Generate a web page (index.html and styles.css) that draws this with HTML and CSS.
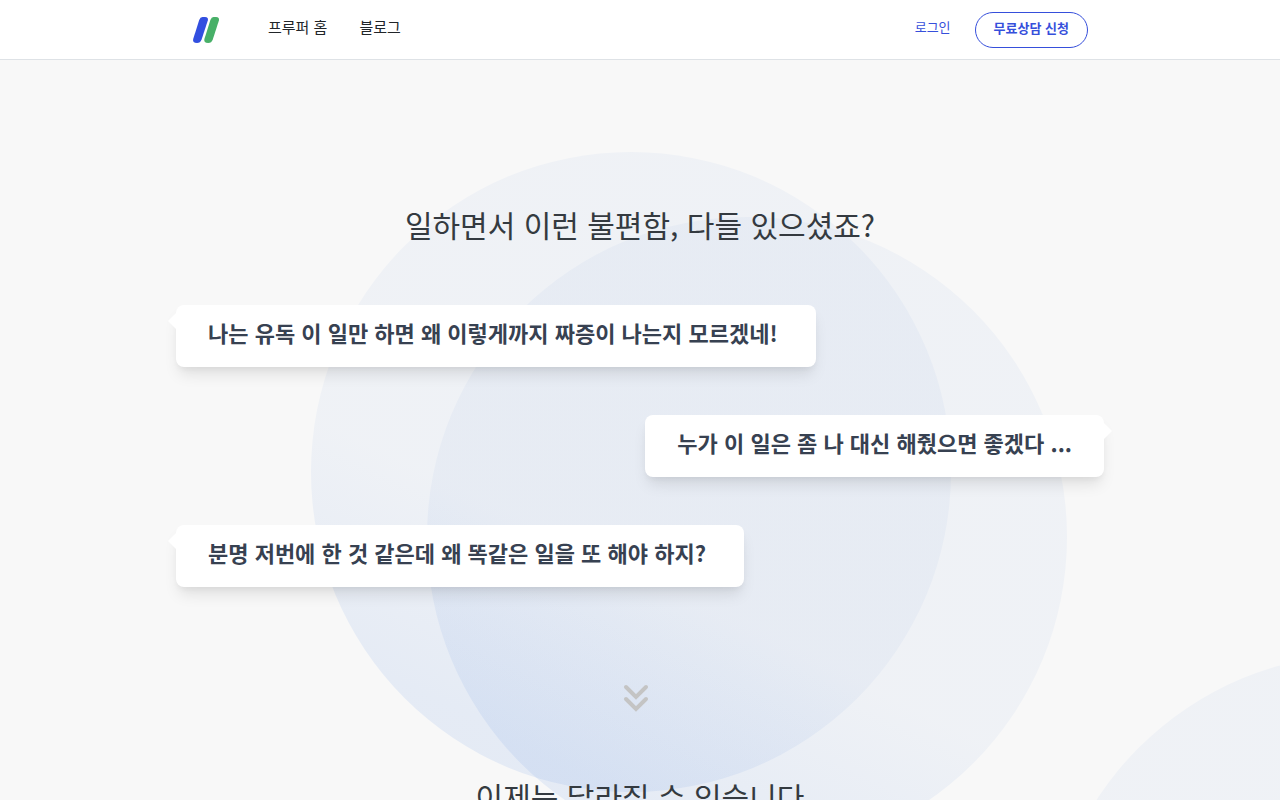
FILE: index.html
```html
<!DOCTYPE html>
<html lang="ko">
<head>
  <meta charset="UTF-8">
  <title>프루퍼</title>
  <meta name="viewport" content="width=device-width, initial-scale=1.0">
  <link rel="stylesheet" href="styles.css">
</head>
<body>

  <header class="header">
    <div class="header-inner">
      <a class="logo" href="#" aria-label="프루퍼">
        <svg width="28" height="28" viewBox="0 0 28 28">
          <path d="M10.500 1H13q3.700 0 2.800 3.500L9.600 23.500Q8.300 27 5 27Q.300 27 1.200 23L7.200 4Q8.200 1 10.500 1z" fill="#324fe0"/>
          <path d="M21.500 1H24q3.700 0 2.900 3.500L20.800 23.500Q19.500 27 16.200 27Q11.500 27 12.400 23L18.400 4Q19.400 1 21.500 1z" fill="#48b068"/>
        </svg>
      </a>
      <nav class="nav">
        <a href="#">프루퍼 홈</a>
        <a href="#">블로그</a>
      </nav>
      <div class="actions">
        <a class="login" href="#">로그인</a>
        <button class="btn" type="button">무료상담 신청</button>
      </div>
    </div>
  </header>

  <main class="main">
    <div class="circle circle-1"></div>
    <div class="circle circle-2"></div>
    <div class="circle circle-3"></div>

    <section class="problems">
      <h2>일하면서 이런 불편함, 다들 있으셨죠?</h2>
      <div class="bubbles">
        <p class="bubble">나는 유독 이 일만 하면 왜 이렇게까지 짜증이 나는지 모르겠네!</p>
        <p class="bubble right">누가 이 일은 좀 나 대신 해줬으면 좋겠다 ...</p>
        <p class="bubble">분명 저번에 한 것 같은데 왜 똑같은 일을 또 해야 하지?</p>
      </div>
      <svg class="arrow" width="40" height="32" viewBox="0 0 40 32">
        <path d="M6 7l10 10 10-10M6 19l10 10 10-10" fill="none" stroke="#c4c4c4" stroke-width="4" stroke-linecap="round"/>
      </svg>
      <h2>이제는 달라질 수 있습니다</h2>
    </section>
  </main>

</body>
</html>
```
FILE: styles.css
```css
* { box-sizing: border-box; }
body { margin: 0; font-family: "Noto Sans CJK KR", sans-serif; background: #f8f8f8; color: #343a40; }
a { color: inherit; text-decoration: none; }

.header { height: 60px; background: #fff; border-bottom: 1px solid #dee2e6; }
.header-inner { display: flex; align-items: center; max-width: 896px; height: 59px; margin: 0 auto; }
.logo { display: flex; margin-right: 48px; }
.nav { display: flex; gap: 32px; padding-bottom: 6px; font-size: 15px; color: #212529; }
.actions { display: flex; align-items: center; gap: 24px; margin-left: auto; font-size: 13px; color: #364fdb; }
.login { padding-bottom: 6px; }
.btn { height: 36px; padding: 0 18px 4px; font: bold 13px "Noto Sans CJK KR", sans-serif; color: #364fdb; background: #fff; border: 1px solid #364fdb; border-radius: 18px; cursor: pointer; }

.main { position: relative; overflow: hidden; }
.problems { position: relative; display: flex; flex-direction: column; align-items: center; max-width: 928px; margin: 0 auto; padding: 140px 0 120px; }
h2 { margin: 0; font-size: 30px; line-height: 48px; font-weight: 400; }

.bubbles { display: flex; flex-direction: column; align-items: flex-start; gap: 48px; width: 100%; margin: 57px 0 93px; }
.bubble { position: relative; margin: 0; padding: 9px 38px 17px 32px; font-size: 22px; line-height: 36px; font-weight: bold; color: #374151; background: #fff; border-radius: 8px; box-shadow: 0 10px 15px -3px rgba(0,0,0,0.1), 0 4px 6px -2px rgba(0,0,0,0.05); }
.bubble::before { content: ""; position: absolute; top: 8px; left: -8px; border: 8px solid transparent; border-left: 0; border-right-color: #fff; }
.bubble.right { align-self: flex-end; padding: 9px 32px 17px; }
.bubble.right::before { left: auto; right: -8px; border: 8px solid transparent; border-right: 0; border-left-color: #fff; }
.arrow { margin-bottom: 60px; }

/* background circles */
.circle { position: absolute; width: 640px; height: 640px; border-radius: 50%; background: linear-gradient(25deg, rgba(129,167,229,0.18), rgba(129,167,229,0.16) 16%, rgba(160,185,226,0.1) 40%); }
.circle-1 { top: 92px; left: calc(50% - 329px); }
.circle-2 { top: 157px; left: calc(50% - 213px); }
.circle-3 { top: 594px; left: calc(50% + 405px); }
```
